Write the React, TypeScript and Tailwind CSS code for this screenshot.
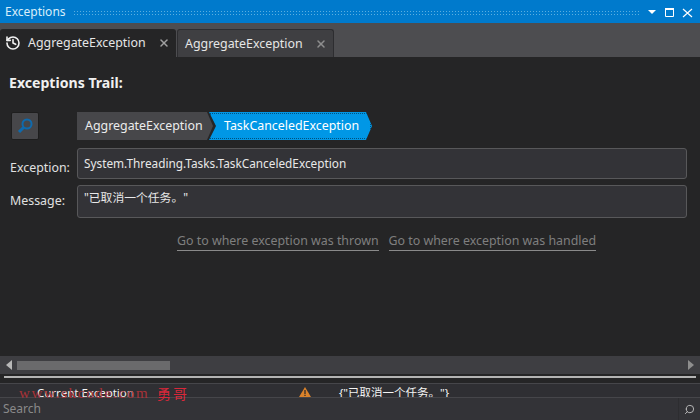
import { X, History, Search } from "lucide-react";

const font = "font-['Noto_Sans','Noto_Sans_CJK_SC',sans-serif]";

function Tab({ active, label }: { active?: boolean; label: string }) {
  return (
    <div
      className={
        active
          ? "flex h-[28px] w-[176px] items-center rounded-t-[3px] bg-[#252526] pl-[5px]"
          : "ml-px flex h-[28px] w-[157px] items-center rounded-t-[3px] border border-b-0 border-[#2d2d30] bg-[#3f3f42] pl-[7px]"
      }
    >
      {active && <History size={16} strokeWidth={2.4} className="mr-[7px] text-[#f1f1f1]" />}
      <span className="pt-px text-[12.4px] leading-none text-[#e6e6e6]">{label}</span>
      <X size={12} strokeWidth={3} className={active ? "ml-[12px] text-[#a0a0a0]" : "ml-[12px] text-[#8e8e8e]"} />
    </div>
  );
}

function Field({
  label,
  value,
  boxClass,
  labelClass,
}: {
  label: string;
  value: string;
  boxClass: string;
  labelClass: string;
}) {
  return (
    <div className="flex items-start">
      <span className={`w-[68px] pl-[1px] text-[12.4px] leading-[18px] text-[#e0e0e0] ${labelClass}`}>{label}</span>
      <div className={`flex flex-1 items-start rounded-[3px] border border-[#58585a] bg-[#333337] pl-[6px] ${boxClass}`}>
        <span className="text-[11.8px] leading-[16px] text-[#e8e8e8]">{value}</span>
      </div>
    </div>
  );
}

export default function App() {
  return (
    <div className={`flex h-[420px] w-[700px] flex-col overflow-hidden bg-[#252526] ${font}`}>
      {/* title bar */}
      <div className="flex h-[23px] items-center bg-[#007acc] pl-[5px] pr-[4px] pt-px">
        <span className="text-[12px] leading-none text-[#d8eefa]">Exceptions</span>
        <div className="mx-[7px] h-[5px] flex-1 bg-[radial-gradient(#5aaee0_1px,transparent_1px)] bg-[length:3px_3px]" />
        <svg width="48" height="14" viewBox="0 0 48 14" fill="none" className="text-white">
          <path d="M0 5h8l-4 4z" fill="currentColor" />
          <path d="M17.5 3.5h8v8h-8z" stroke="currentColor" />
          <path d="M17 4h9" stroke="currentColor" strokeWidth="2" />
          <path d="M35 4l9 8M44 4l-9 8" stroke="currentColor" strokeWidth="1.2" />
        </svg>
      </div>

      {/* tab strip */}
      <div className="flex h-[34px] items-end bg-[#4d4d50]">
        <Tab active label="AggregateException" />
        <Tab label="AggregateException" />
      </div>

      {/* main panel */}
      <div className="flex h-[299px] flex-col pl-[9px] pr-[13px]">
        <div className="mt-[15px] text-[14.1px] font-bold leading-[22px] text-[#f0f0f0]">Exceptions Trail:</div>

        <div className="mt-[18px] flex items-center">
          <div className="ml-[2px] flex h-[28px] w-[28px] items-center justify-center rounded-[2px] border border-[#1e1e1e] bg-[#47474a]">
            <svg width="18" height="18" viewBox="0 0 18 18" fill="none" className="text-[#0f6aad]">
              <circle cx="11" cy="7" r="4.5" stroke="currentColor" strokeWidth="2" />
              <path d="M7.5 10.5L3 15" stroke="currentColor" strokeWidth="3" />
            </svg>
          </div>
          <div className="ml-[38px] flex h-[28px] items-center">
            <div className="flex h-full w-[136px] items-center bg-[#47474a] pl-[8px] pt-px text-[12.4px] text-[#ececec] [clip-path:polygon(0_0,130px_0,136px_14px,130px_28px,0_28px)]">
              AggregateException
            </div>
            <div className="relative -ml-[4px] flex h-full w-[163px] items-center bg-[#0097e6] pl-[15px] pt-px text-[12.4px] text-white [clip-path:polygon(0_0,157px_0,163px_14px,157px_28px,0_28px,7px_14px)]">
              TaskCanceledException
              <div className="absolute inset-[1px] border border-dotted border-[#00527f]" />
            </div>
          </div>
        </div>

        <div className="mt-[8px] flex flex-col gap-[6px]">
          <Field
            label="Exception:"
            value="System.Threading.Tasks.TaskCanceledException"
            boxClass="h-[31px] pt-[6px]"
            labelClass="pt-[11px]"
          />
          <Field
            label="Message:"
            value={'"已取消一个任务。"'}
            boxClass="h-[33px] pt-[3px]"
            labelClass="pt-[7px]"
          />
        </div>

        <div className="ml-[168px] mt-[13px] flex gap-[10px] text-[12.4px] leading-[19px] text-[#7f7f7f]">
          <span className="border-b border-[#8a8a8a]">Go to where exception was thrown</span>
          <span className="border-b border-[#8a8a8a]">Go to where exception was handled</span>
        </div>
      </div>

      {/* horizontal scrollbar */}
      <div className="flex h-[18px] items-center bg-[#3e3e42] px-[6px]">
        <svg width="6" height="10" viewBox="0 0 6 10" className="shrink-0 text-[#b8b8b8]">
          <path d="M6 0v10L0 5z" fill="currentColor" />
        </svg>
        <div className="ml-[5px] h-[9px] w-[153px] bg-[#6a6a6c]" />
        <div className="flex-1" />
        <svg width="6" height="10" viewBox="0 0 6 10" className="shrink-0 text-[#8e8e8e]">
          <path d="M0 0v10l6-5z" fill="currentColor" />
        </svg>
      </div>
      <div className="h-[2px] shrink-0 bg-[#252526]" />
      <div className="mx-[4px] h-[2px] shrink-0 bg-[#b4b4b4]" />
      <div className="h-[5px] shrink-0 bg-[#252526]" />

      {/* grid row, the watermark spills over its lower edge */}
      <div className="relative h-[14px] shrink-0">
        <div className="relative flex h-full items-start overflow-hidden border-t border-[#46464a] bg-[#2f2f33] pl-[37px] text-[11.5px] leading-[18px] text-[#f4f4f4]">
          <span>Current Exception</span>
          <svg width="12" height="10" viewBox="0 0 12 10" className="absolute left-[299px] top-[3px]">
            <path d="M6 0l6 10H0z" fill="#d9822b" />
            <path d="M5.4 3h1.2v4H5.4zM5.4 7.7h1.2v1.2H5.4z" fill="#252526" />
          </svg>
          <span className="absolute left-[339px] top-0">{'{"已取消一个任务。"}'}</span>
        </div>
        <span className="absolute left-[19px] top-0 font-['Liberation_Serif','Noto_Sans_CJK_SC',serif] text-[15px] leading-[20px] tracking-[1.7px] text-[#a83238]">
          www.skcode.com
        </span>
        <span className="absolute left-[157px] top-0 font-['Noto_Sans_CJK_SC',serif] text-[14px] leading-[20px] tracking-[2px] text-[#d8283a]">
          勇哥
        </span>
      </div>

      {/* search */}
      <div className="flex h-[23px] shrink-0 items-center justify-between border-t border-[#46464a] bg-[#333337] pl-[3px]">
        <span className="text-[12px] text-[#8a8a8a]">Search</span>
        <div className="flex h-full w-[22px] items-center justify-center border-l border-[#2d2d30]">
          <Search size={11} className="-scale-x-100 text-[#c0c0c0]" />
        </div>
      </div>
    </div>
  );
}
